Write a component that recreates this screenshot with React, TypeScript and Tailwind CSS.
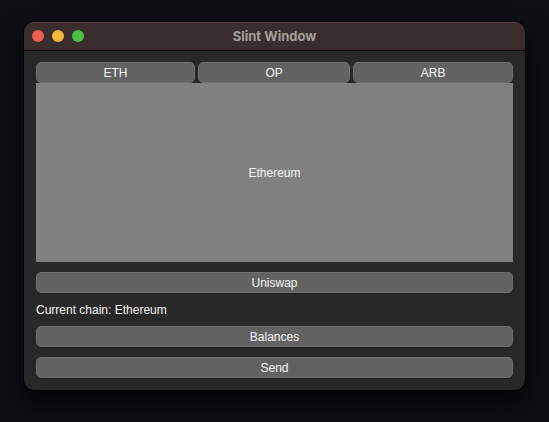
import { useState } from "react";
import type { ReactNode } from "react";

const chains = [
  { symbol: "ETH", name: "Ethereum" },
  { symbol: "OP", name: "Optimism" },
  { symbol: "ARB", name: "Arbitrum" },
];

function PushButton({
  children,
  grow = false,
  onClick,
}: {
  children: ReactNode;
  grow?: boolean;
  onClick?: () => void;
}) {
  return (
    <button
      type="button"
      onClick={onClick}
      className={`h-[21px] rounded-[5px] border border-[#707070] bg-[#626262] pt-0.5 text-center leading-[17px] shadow-[0_1px_1px_rgba(0,0,0,0.25)] ${
        grow ? "flex-auto" : "w-full"
      }`}
    >
      {children}
    </button>
  );
}

function TitleBar() {
  return (
    <header className="grid h-[29px] grid-cols-[1fr_auto_1fr] items-center border-b border-black bg-[#392e2d] px-2 shadow-[inset_0_1px_0_#544a49]">
      <div className="flex gap-2">
        <button type="button" aria-label="Close" className="size-3 rounded-full bg-[#ee6052]" />
        <button type="button" aria-label="Minimize" className="size-3 rounded-full bg-[#f4b93a]" />
        <button type="button" aria-label="Zoom" className="size-3 rounded-full bg-[#4bc043]" />
      </div>
      <h1 className="font-[Inter,sans-serif] text-[13px] leading-4 font-bold text-[#a69e9d]">
        Slint Window
      </h1>
    </header>
  );
}

export default function App() {
  const [chain, setChain] = useState("Ethereum");

  return (
    <div className="flex min-h-screen bg-[#0e0f13] px-6 pt-[22px] pb-8 font-['Liberation_Sans',Arial,sans-serif] text-[12px] text-[#f5f5f5]">
      <main className="flex flex-1 flex-col overflow-hidden rounded-[10px] bg-[#282828] shadow-[0_0_0_1px_#000,0_14px_24px_2px_rgba(0,0,0,0.65)]">
        <TitleBar />
        <div className="flex flex-1 flex-col gap-2.5 px-3 pt-[11px] pb-3">
          <section className="flex flex-1 flex-col">
            <div className="flex gap-[3px]">
              {chains.map(({ symbol, name }) => (
                <PushButton key={symbol} grow onClick={() => setChain(name)}>
                  {symbol}
                </PushButton>
              ))}
            </div>
            <div className="flex flex-1 items-center justify-center bg-[#808080]">{chain}</div>
          </section>
          <PushButton>Uniswap</PushButton>
          <p className="pt-px leading-[12px]">Current chain: {chain}</p>
          <PushButton>Balances</PushButton>
          <PushButton>Send</PushButton>
        </div>
      </main>
    </div>
  );
}
